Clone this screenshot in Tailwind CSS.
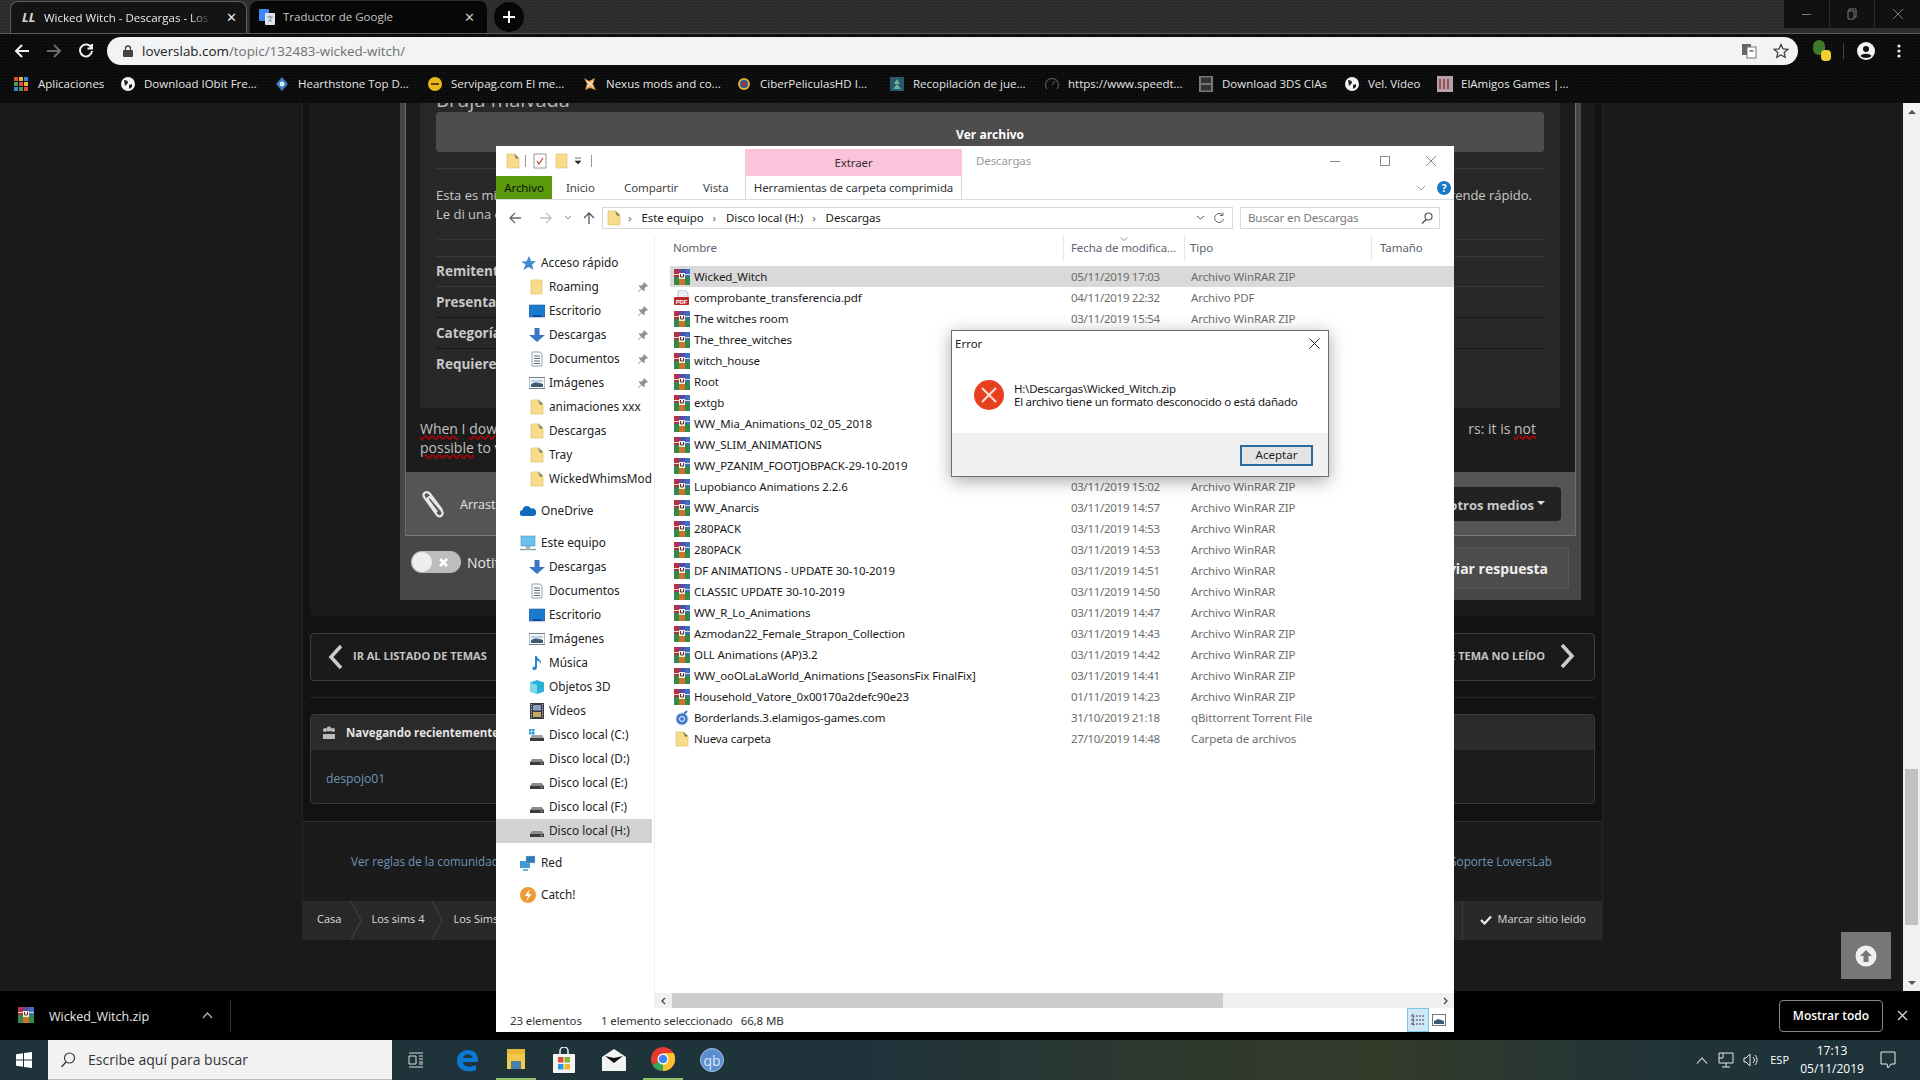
<!DOCTYPE html>
<html lang="es">
<head>
<meta charset="UTF-8" />
<title>Wicked Witch - Descargas</title>
<script src="https://cdn.jsdelivr.net/npm/@tailwindcss/browser@4"></script>
</head>
<body class="bg-black">
<!-- icon sprite -->
<svg class="absolute h-0 w-0">
  <symbol id="rar" viewBox="0 0 16 16">
    <rect x="0" y="0" width="5" height="8" fill="#b8323e"/><rect x="5" y="0" width="6" height="8" fill="#5a4aa8"/><rect x="11" y="0" width="5" height="8" fill="#3c6fc0"/>
    <rect x="0" y="8" width="5" height="8" fill="#2e8b4a"/><rect x="5" y="8" width="6" height="8" fill="#d0702a"/><rect x="11" y="8" width="5" height="8" fill="#2e8b4a"/>
    <rect x="0" y="5" width="16" height="1" fill="#e8d8d8"/><rect x="5" y="4" width="6" height="6" fill="#f4f0e8"/><path d="M6.500 5v3h3V5" fill="none" stroke="#5a3020" stroke-width="1"/>
  </symbol>
  <symbol id="pdf" viewBox="0 0 16 16">
    <path d="M4 0h7l3 3v6H4z" fill="#e6edf5" stroke="#8aa0b8" stroke-width=".6"/><rect x="0" y="7" width="15" height="8" rx="1" fill="#c0272d"/><text x="7.500" y="13.500" font-size="6" font-weight="700" fill="#fff" text-anchor="middle" font-family="Liberation Sans">PDF</text>
  </symbol>
  <symbol id="zipf" viewBox="0 0 16 16">
    <path d="M2 1h8l4 4v10H2z" fill="#f8dc8c" stroke="#e2c26a" stroke-width=".7"/><path d="M9 1l5 4-3 1z" fill="#6f8a6a"/>
  </symbol>
  <symbol id="folder" viewBox="0 0 16 16"><path d="M2 1h11v14H2z" fill="#f8dc8c" stroke="#e2c26a" stroke-width=".7"/></symbol>
  <symbol id="star" viewBox="0 0 16 16"><path d="M9 1l2 5 5 .3-4 3.300 1.400 5.200L8.500 12l-5 3 2-5.500L1 6.500l5.500-.3z" fill="#3e8bd3"/></symbol>
  <symbol id="desk" viewBox="0 0 16 16"><rect x="0" y="2" width="16" height="12" fill="#1a7ad0" stroke="#3a5a80" stroke-width=".6"/><rect x="4" y="12" width="8" height="2" fill="#0d4f96"/></symbol>
  <symbol id="down" viewBox="0 0 16 16"><path d="M5.500 1h5v7H16l-8 7-8-7h5.500z" fill="#3b78c4"/></symbol>
  <symbol id="doc" viewBox="0 0 16 16"><path d="M3 1h8l2 2v12H3z" fill="#fff" stroke="#7c8a98" stroke-width=".8"/><path d="M5 5h6M5 7.500h6M5 10h6M5 12.500h6" stroke="#5a6a7a"/></symbol>
  <symbol id="img" viewBox="0 0 16 16"><rect x="0" y="2.500" width="16" height="11" fill="#fff" stroke="#707c88"/><path d="M2 9l5-2 7 2v3H2z" fill="#3d5a74"/><rect x="2" y="4.500" width="12" height="3" fill="#c3d6e8"/></symbol>
  <symbol id="cloud" viewBox="0 0 16 16"><path d="M3 13a3 3 0 0 1-.500-6 4.500 4.500 0 0 1 8.500-1.500A3.800 3.800 0 0 1 13.500 13z" fill="#0f6cbd"/></symbol>
  <symbol id="pc" viewBox="0 0 16 16"><rect x="1" y="1" width="14" height="10" fill="#6cc0ee" stroke="#4a90b8" stroke-width=".6"/><path d="M0 14.500h16" stroke="#8aa0b0" stroke-width="1.500"/><rect x="6" y="11" width="4" height="2.500" fill="#9ab"/></symbol>
  <symbol id="music" viewBox="0 0 16 16"><path d="M6 1h1.800c.4 3 5 3.500 4.200 8-.6-2-2.300-3-4-3.200V12.500C8 14.500 6 15.500 4.500 15 3 14.500 3 12.500 4.500 11.800 5 11.500 5.500 11.500 6 11.600z" fill="#2f86d0"/></symbol>
  <symbol id="cube" viewBox="0 0 16 16"><path d="M8 1l7 2.500v9L8 15l-7-2.500v-9z" fill="#2ab0d8"/><path d="M1 3.500L8 6v9l-7-2.500z" fill="#7fd8ea"/></symbol>
  <symbol id="film" viewBox="0 0 16 16"><rect x="1" y="0" width="14" height="16" fill="#3a3a44"/><rect x="4" y="2" width="8" height="5.500" fill="#8aa0c0"/><rect x="4" y="9" width="8" height="5" fill="#c8a860"/><path d="M2.500 1v14M13.500 1v14" stroke="#ddd" stroke-dasharray="1 1.500"/></symbol>
  <symbol id="drive" viewBox="0 0 16 16"><path d="M3 8h10l2 3v3H1v-3z" fill="#8c8c8c"/><rect x="1" y="11" width="14" height="3" fill="#3c3c3c"/><rect x="11.500" y="12" width="2" height="1" fill="#9ad"/></symbol>
  <symbol id="drivec" viewBox="0 0 16 16"><path d="M3 8h10l2 3v3H1v-3z" fill="#a0a0a0"/><rect x="1" y="11" width="14" height="3" fill="#3c3c3c"/><path d="M0 2h2.500v2.500H0zM3 2h2.500v2.500H3zM0 5h2.500v2.500H0zM3 5h2.500v2.500H3z" fill="#2aa0d8"/></symbol>
  <symbol id="net" viewBox="0 0 16 16"><rect x="0" y="6" width="10" height="7" fill="#3f9ad8"/><rect x="6" y="1" width="9" height="7" fill="#2c7ab8" stroke="#bcd" stroke-width=".4"/><path d="M3 15h5" stroke="#3f9ad8" stroke-width="1.500"/></symbol>
  <symbol id="catch" viewBox="0 0 16 16"><circle cx="8" cy="8" r="8" fill="#ee9a35"/><path d="M9.500 2L5 9h3l-1.500 5L11.500 7H8.500z" fill="#fff"/></symbol>
  <symbol id="pin" viewBox="0 0 12 12"><path d="M7 1l4 4-1 .7-.7-.2L7.500 7.300 7.700 9.500 6.700 10.300 4.500 8 1.500 11 1 10.500 4 7.500 1.800 5.300 2.600 4.300 4.700 4.500 6.500 2.700 6.300 2z" fill="#8f8f8f"/></symbol>
  <symbol id="qb" viewBox="0 0 16 16"><circle cx="8" cy="9" r="6" fill="#3f78d0" stroke="#b9cde8" stroke-width="1"/><circle cx="8" cy="9" r="2.500" fill="none" stroke="#fff"/><path d="M10 4l3-3" stroke="#3f78d0" stroke-width="2"/></symbol>
</svg>

<div class="relative flex h-[1080px] w-[1920px] flex-col overflow-hidden font-['Open_Sans',sans-serif]">

  <!-- tab strip -->
  <div class="flex h-[34px] shrink-0 items-end border-b border-[#5a5a5a] bg-[#2c2c2c] bg-[radial-gradient(#383838_1px,transparent_1px)] bg-size-[3px_3px] pl-[10px]">
    <div class="flex h-[32px] w-[237px] items-center rounded-t-lg border border-b-0 border-[#5c5c5c] bg-[#141414] pl-[11px] text-[11.500px] text-[#e8e8e8]">
      <span class="w-[16px] text-[13px] leading-none font-bold italic text-[#d8d8d8]">LL</span>
      <span class="ml-[6px] w-[167px] overflow-hidden whitespace-nowrap [mask-image:linear-gradient(90deg,#000_88%,transparent)]">Wicked Witch - Descargas - Los S</span>
      <span class="ml-[15px] text-[13px] leading-none">✕</span>
    </div>
    <div class="ml-[3px] flex h-[32px] w-[237px] items-center rounded-t-lg bg-[#070707] pl-[9px] text-[11.500px] text-[#c4c4c4]">
      <svg class="h-4 w-4" viewBox="0 0 16 16"><rect width="10" height="12" rx="1" fill="#4285f4"/><rect x="6" y="4" width="10" height="12" rx="1" fill="#dfe5ee"/><path d="M8 8h6M11 6.500v1.500M9 13c2-1 3-3 3.500-5M10 10l3 3" stroke="#6a7a90" stroke-width=".8" fill="none"/></svg>
      <span class="ml-[8px] w-[170px] whitespace-nowrap">Traductor de Google</span>
      <span class="ml-[11px] text-[13px] leading-none">✕</span>
    </div>
    <div class="mb-px ml-[7px] flex h-[30px] w-[30px] items-center justify-center rounded-full bg-[#070707]">
      <svg class="h-[14px] w-[14px]" viewBox="0 0 14 14"><path d="M7 1v12M1 7h12" stroke="#fff" stroke-width="2"/></svg>
    </div>
    <div class="ml-auto flex h-[28px] self-start text-[#6c6c6c]">
      <div class="flex w-[46px] items-center justify-center border-r border-[#2a2a2a] bg-[#111]"><span class="h-px w-[9px] bg-[#7a7a7a]"></span></div>
      <div class="flex w-[45px] items-center justify-center border-r border-[#2a2a2a] bg-[#111]"><svg class="h-[12px] w-[12px]" viewBox="0 0 12 12"><path d="M3 3V1h7v8H8M2 3h6v8H2z" fill="none" stroke="#7a7a7a"/></svg></div>
      <div class="flex w-[45px] items-center justify-center bg-[#111]"><svg class="h-[12px] w-[12px]" viewBox="0 0 12 12"><path d="M1 1l10 10M11 1L1 11" stroke="#7a7a7a"/></svg></div>
    </div>
  </div>

  <!-- toolbar -->
  <div class="flex h-[34px] shrink-0 items-center bg-[#0b0b0b] bg-[radial-gradient(#191919_1px,transparent_1px)] bg-size-[3px_3px]">
    <svg class="ml-[14px] h-4 w-4" viewBox="0 0 16 16"><path d="M15 8H2M8 2L2 8l6 6" fill="none" stroke="#f0f0f0" stroke-width="2"/></svg>
    <svg class="ml-[16px] h-4 w-4" viewBox="0 0 16 16"><path d="M1 8h13M8 2l6 6-6 6" fill="none" stroke="#6a6a6a" stroke-width="2"/></svg>
    <svg class="ml-[16px] h-4 w-4" viewBox="0 0 16 16"><path d="M13.500 5A6 6 0 1 0 14 8M14 1v4.500H9.500" fill="none" stroke="#f0f0f0" stroke-width="2"/></svg>
    <div class="ml-[13px] flex h-[28px] w-[1691px] items-center rounded-full bg-[#f1f3f4] pl-[16px] text-[13.400px]">
      <svg class="h-[12px] w-[10px]" viewBox="0 0 10 12"><rect y="5" width="10" height="7" rx="1" fill="#444"/><path d="M2.500 5V3.500a2.500 2.500 0 0 1 5 0V5" fill="none" stroke="#444" stroke-width="1.300"/></svg>
      <span class="ml-[9px] text-[#222]">loverslab.com<span class="text-[#6f6f6f]">/topic/132483-wicked-witch/</span></span>
      <svg class="ml-auto h-4 w-4" viewBox="0 0 16 16"><rect x="1" y="1" width="9" height="11" fill="#666"/><rect x="6" y="4" width="9" height="11" fill="#fff" stroke="#777"/><path d="M8 8h5M10.500 7v1" stroke="#555"/></svg>
      <svg class="mr-[9px] ml-[16px] h-4 w-4" viewBox="0 0 16 16"><path d="M8 1.500l2 4.500 4.800.4-3.600 3.200 1 4.700L8 11.900 3.800 14.300l1-4.700L1.200 6.400 6 6z" fill="none" stroke="#444" stroke-width="1.300"/></svg>
    </div>
    <div class="relative ml-[15px] h-[22px] w-[16px]">
      <div class="h-[15px] w-[12px] rounded-full bg-[#3f7a2a]"></div>
      <div class="absolute top-[10px] left-[8px] h-[11px] w-[10px] rounded-sm bg-[#f0d030]"></div>
    </div>
    <span class="ml-[14px] h-[16px] w-px bg-[#444]"></span>
    <svg class="ml-[13px] h-[18px] w-[18px]" viewBox="0 0 18 18"><circle cx="9" cy="9" r="9" fill="#f4f4f4"/><circle cx="9" cy="7" r="3" fill="#111"/><path d="M3.500 14c1.500-3 9.500-3 11 0-2 2.500-9 2.500-11 0z" fill="#111"/></svg>
    <svg class="ml-[22px] h-[14px] w-[4px]" viewBox="0 0 4 14"><circle cx="2" cy="2" r="1.600" fill="#eee"/><circle cx="2" cy="7" r="1.600" fill="#eee"/><circle cx="2" cy="12" r="1.600" fill="#eee"/></svg>
  </div>

  <!-- bookmarks -->
  <div class="flex h-[35px] shrink-0 items-center bg-[#0b0b0b] bg-[radial-gradient(#191919_1px,transparent_1px)] bg-size-[3px_3px] pb-[3px] pl-[14px] text-[11.500px] whitespace-nowrap text-[#e4e4e4]">
    <div class="flex w-[107px] items-center"><svg class="h-[14px] w-[14px]" viewBox="0 0 14 14"><path d="M0 0h4v4H0z" fill="#e04a3a"/><path d="M5 0h4v4H5z" fill="#f0b030"/><path d="M10 0h4v4h-4z" fill="#3a80e0"/><path d="M0 5h4v4H0z" fill="#40a050"/><path d="M5 5h4v4H5z" fill="#e04a3a"/><path d="M10 5h4v4h-4z" fill="#f0b030"/><path d="M0 10h4v4H0z" fill="#3a80e0"/><path d="M5 10h4v4H5z" fill="#40a050"/><path d="M10 10h4v4h-4z" fill="#e04a3a"/></svg><span class="ml-[10px]">Aplicaciones</span></div>
    <div class="flex w-[154px] items-center"><svg class="h-[14px] w-[14px]" viewBox="0 0 14 14"><circle cx="7" cy="7" r="7" fill="#f4f4f4"/><path d="M3 3c3 0 4 1 4 3l-3 3zM8 8l3-1 0 3-3 2z" fill="#222"/></svg><span class="ml-[9px]">Download IObit Fre...</span></div>
    <div class="flex w-[153px] items-center"><svg class="h-[14px] w-[14px]" viewBox="0 0 14 14"><path d="M7 0l6 7-6 7-6-7z" fill="#3a78c0"/><circle cx="7" cy="7" r="2.500" fill="#d8e8f8"/></svg><span class="ml-[9px]">Hearthstone Top D...</span></div>
    <div class="flex w-[155px] items-center"><svg class="h-[14px] w-[14px]" viewBox="0 0 14 14"><circle cx="7" cy="7" r="7" fill="#e8b818"/><path d="M3 7h8" stroke="#604008" stroke-width="2"/></svg><span class="ml-[9px]">Servipag.com El me...</span></div>
    <div class="flex w-[154px] items-center"><svg class="h-[14px] w-[14px]" viewBox="0 0 14 14"><path d="M1 1l5 3 6-3-2 6 3 6-6-2-5 2 2-6z" fill="#e0a050"/><path d="M4 4l6 6M10 4l-6 6" stroke="#f4e4c8" stroke-width="1.500"/></svg><span class="ml-[9px]">Nexus mods and co...</span></div>
    <div class="flex w-[153px] items-center"><svg class="h-[14px] w-[14px]" viewBox="0 0 14 14"><circle cx="7" cy="7" r="6" fill="#e0b030"/><circle cx="7" cy="7" r="4" fill="#2a58a0"/><circle cx="7" cy="7" r="2" fill="#c83020"/></svg><span class="ml-[9px]">CiberPeliculasHD I...</span></div>
    <div class="flex w-[155px] items-center"><svg class="h-[14px] w-[14px]" viewBox="0 0 14 14"><rect width="14" height="14" fill="#2a5a68"/><path d="M7 2l3 5H4zM3 12l4-5 4 5z" fill="#6ab0a0"/></svg><span class="ml-[9px]">Recopilación de jue...</span></div>
    <div class="flex w-[154px] items-center"><svg class="h-[14px] w-[14px]" viewBox="0 0 14 14"><path d="M2 12a6.500 6.500 0 1 1 10 0M7 8l3-4" fill="none" stroke="#555" stroke-width="1.200"/></svg><span class="ml-[9px]">https://www.speedt...</span></div>
    <div class="flex w-[146px] items-center"><svg class="h-[16px] w-[14px]" viewBox="0 0 14 16"><rect width="14" height="16" fill="#777"/><rect x="2" y="1.500" width="10" height="5.500" fill="#333"/><rect x="2" y="9" width="10" height="5.500" fill="#333"/></svg><span class="ml-[9px]">Download 3DS CIAs</span></div>
    <div class="flex w-[92px] items-center"><svg class="h-[14px] w-[14px]" viewBox="0 0 14 14"><circle cx="7" cy="7" r="7" fill="#f4f4f4"/><path d="M3 3c3 0 4 1 4 3l-3 3zM8 8l3-1 0 3-3 2z" fill="#222"/></svg><span class="ml-[9px]">Vel. Vídeo</span></div>
    <div class="flex items-center"><svg class="h-[16px] w-[16px]" viewBox="0 0 16 16"><rect width="16" height="16" fill="#b8a0a8"/><path d="M3 3v10M7 3v10M11 3v10" stroke="#8a3a40" stroke-width="1.500"/></svg><span class="ml-[8px]">ElAmigos Games |...</span></div>
  </div>

  <!-- web page -->
  <div class="relative flex h-[888px] shrink-0 bg-[#1a1a1a]">
    <div class="h-full flex-1 overflow-hidden pl-[302px]">
      <div class="w-[1301px] border-x border-[#262626] bg-[#121212] text-[13px] text-[#c8c8c8]">
        <div class="mx-[7px]">
          <!-- main panel -->
          <div class="rounded-b-sm bg-[#1b1b1b] pr-[14px] pb-[16px] pl-[90px]">
            <div class="bg-[#474747] px-[5px]">
              <div class="border-x border-[#6e6e6e] bg-[#1c1c1c]">
                <div class="mr-[15px] ml-[14px] h-[305px] bg-[#282828] px-[16px]">
                  <div class="h-[9px] overflow-hidden"><div class="-mt-[16px] text-[20px] leading-[26px] text-[#b8b8b8]">Bruja malvada</div></div>
                  <div class="flex h-[40px] items-center justify-center rounded-sm bg-[#4d4d4d] pt-[6px] text-[12px] font-bold text-white">Ver archivo</div>
                  <div class="mt-[16px] border-t border-[#3a3a3a] pt-[17px] text-[13px] leading-[19px]">
                    <div class="flex justify-between pr-[12px]"><span>Esta es mi bruja malvada</span><span>rende rápido.</span></div>
                    <div>Le di una expresión</div>
                  </div>
                  <div class="mt-[15px] h-[17px] border-t border-[#343434]"></div>
                  <div class="flex h-[31px] items-center border-y border-[#3a3a3a] text-[13.500px] font-bold">Remitente</div>
                  <div class="flex h-[31px] items-center border-b border-[#161616] text-[13.500px] font-bold">Presentado</div>
                  <div class="flex h-[31px] items-center border-b border-[#161616] text-[13.500px] font-bold">Categoría</div>
                  <div class="flex h-[31px] items-center text-[13.500px] font-bold">Requiere</div>
                </div>
                <div class="mr-[39px] ml-[14px] flex h-[64px] flex-col pt-[11px] text-[14px] leading-[19px] text-[#c0c0c0]">
                  <div class="flex justify-between"><span><span class="underline decoration-red-700 decoration-wavy">When</span> I <span class="underline decoration-red-700 decoration-wavy">download</span></span><span>rs: it is <span class="underline decoration-red-700 decoration-wavy">not</span></span></div>
                  <div><span class="underline decoration-red-700 decoration-wavy">possible</span> to view</div>
                </div>
                <div class="flex h-[64px] items-center border-b border-[#7a7a7a] bg-[#555] pr-[14px] pl-[14px] text-[#e4e4e4]">
                  <svg class="h-[30px] w-[26px]" viewBox="0 0 26 30"><path d="M22 21L10 5C7 1 2 4 4 8l13 18c3 3 7 0 5-4L11 9c-2-2-4 0-3 2l9 12" fill="none" stroke="#e8e8e8" stroke-width="2.200"/></svg>
                  <span class="mt-[4px] ml-[14px] text-[12.500px]">Arrastra archivos aquí</span>
                  <div class="ml-auto flex h-[34px] items-center gap-[3px] rounded-sm bg-[#222] pt-[5px] pr-[16px] pl-[26px] font-bold text-[#c8c8c8]">Insertar por otros medios<span class="mb-[6px] h-0 w-0 border-x-[4px] border-t-[4px] border-x-transparent border-t-[#ddd]"></span></div>
                </div>
              </div>
              <div class="-mx-[5px] flex h-[64px] items-center pr-[12px] pl-[11px]">
                <div class="mb-[12px] flex h-[22px] w-[50px] items-center rounded-full bg-[#bdbdbd]"><span class="ml-[1px] h-[20px] w-[20px] rounded-full bg-[#eee]"></span><svg class="ml-[7px] h-[9px] w-[9px]" viewBox="0 0 9 9"><path d="M1 1l7 7M8 1L1 8" stroke="#fff" stroke-width="2.500"/></svg></div>
                <span class="mb-[12px] ml-[6px] text-[14px] text-[#e8e8e8]">Notificarme de respuestas</span>
                <div class="ml-auto flex h-[42px] items-center border border-[#565656] bg-[#4c4c4c] px-[20px] text-[14px] font-bold text-[#f0f0f0]">Enviar respuesta</div>
              </div>
            </div>
          </div>
          <!-- pager -->
          <div class="mt-[17px] flex h-[48px] items-center justify-between rounded-sm border border-[#3e3e3e] bg-[#1a1a1a] pr-[19px] pl-[17px] text-[11px] font-bold text-[#c4c4c4]">
            <div class="flex items-center"><svg class="h-[26px] w-[15px]" viewBox="0 0 15 26"><path d="M13 2L3 13l10 11" fill="none" stroke="#ccc" stroke-width="3.500"/></svg><span class="mb-[2px] ml-[10px]">IR AL LISTADO DE TEMAS</span></div>
            <div class="flex items-center"><span class="mb-[2px]">SIGUIENTE TEMA NO LEÍDO</span><svg class="mb-[2px] ml-[15px] h-[26px] w-[15px]" viewBox="0 0 15 26"><path d="M2 2l10 11L2 24" fill="none" stroke="#ccc" stroke-width="3.500"/></svg></div>
          </div>
          <div class="mt-[16px] border-t border-[#262626]"></div>
          <!-- recently browsing -->
          <div class="mt-[16px] h-[90px] rounded-sm border border-[#3a3a3a] bg-[#1c1c1c]">
            <div class="flex h-[35px] items-center bg-[#2b2b2b] pl-[11px] text-[11.500px] font-bold text-[#e4e4e4]">
              <svg class="h-[14px] w-[14px]" viewBox="0 0 14 14"><circle cx="3" cy="4" r="2" fill="#bbb"/><circle cx="11" cy="4" r="2" fill="#bbb"/><circle cx="7" cy="3" r="2.500" fill="#bbb"/><path d="M1 13V8h12v5z" fill="#bbb"/></svg>
              <span class="ml-[10px]">Navegando recientemente</span>
            </div>
            <div class="pt-[20px] pl-[15px] text-[12.200px] text-[#6d94b8]">despojo01</div>
          </div>
        </div>
        <!-- footer -->
        <div class="mt-[17px] border-t border-[#2e2e2e] bg-[#1b1b1b]">
          <div class="flex h-[79px] items-center justify-between pr-[50px] pl-[48px] text-[11.700px] text-[#6d94b8]"><span>Ver reglas de la comunidad</span><span>Soporte LoversLab</span></div>
          <div class="flex h-[39px] items-center bg-[#292929] pl-[14px] text-[11px] text-[#dcdcdc]">
            <span class="mb-[2px]">Casa</span>
            <svg class="ml-[9px] h-[39px] w-[12px]" viewBox="0 0 12 39"><path d="M1 0l10 19.500L1 39" fill="none" stroke="#444"/></svg>
            <span class="mb-[2px] ml-[9px]">Los sims 4</span>
            <svg class="ml-[7px] h-[39px] w-[12px]" viewBox="0 0 12 39"><path d="M1 0l10 19.500L1 39" fill="none" stroke="#444"/></svg>
            <span class="mb-[2px] ml-[10px]">Los Sims 4 Mods</span>
            <div class="ml-auto flex h-full items-center border-l border-[#3a3a3a] pr-[16px] pl-[17px]">
              <svg class="mb-[2px] h-[10px] w-[12px]" viewBox="0 0 12 10"><path d="M1 5l3.500 3.500L11 1.500" fill="none" stroke="#eee" stroke-width="2.200"/></svg>
              <span class="mb-[2px] ml-[5px]">Marcar sitio leído</span>
            </div>
          </div>
        </div>
      </div>
    </div>
    <!-- page scrollbar -->
    <div class="flex h-full w-[17px] flex-col items-center bg-[#f1f1f1]">
      <div class="flex h-[17px] items-center justify-center"><span class="h-0 w-0 border-x-[4px] border-b-[4px] border-x-transparent border-b-[#505050]"></span></div>
      <div class="mt-[649px] h-[156px] w-[13px] bg-[#c1c1c1]"></div>
      <div class="mt-auto flex h-[17px] items-center justify-center"><span class="h-0 w-0 border-x-[4px] border-t-[4px] border-x-transparent border-t-[#505050]"></span></div>
    </div>
    <!-- back to top -->
    <div class="absolute top-[829px] left-[1841px] flex h-[47px] w-[50px] items-center justify-center bg-[#777]">
      <svg class="h-[22px] w-[22px]" viewBox="0 0 22 22"><circle cx="11" cy="11" r="10.500" fill="#f0f0f0"/><path d="M11 5l6 6h-3.500v6h-5v-6H5z" fill="#777"/></svg>
    </div>
  </div>

  <!-- download bar -->
  <div class="flex h-[49px] shrink-0 items-center bg-black pr-[10px] text-white">
    <svg class="ml-[18px] h-[16px] w-[16px] -translate-y-[1px]"><use href="#rar"/></svg>
    <span class="mt-[4px] ml-[15px] text-[12.500px] text-[#e8e8e8]">Wicked_Witch.zip</span>
    <svg class="ml-[53px] h-[7px] w-[11px]" viewBox="0 0 11 7"><path d="M1 6l4.500-5L10 6" fill="none" stroke="#bbb" stroke-width="1.200"/></svg>
    <span class="ml-[17px] h-[32px] w-px bg-[#333]"></span>
    <div class="ml-auto flex h-[32px] w-[104px] items-center justify-center rounded border border-[#888] text-[12px] font-semibold">Mostrar todo</div>
    <svg class="mr-[2px] ml-[14px] h-[11px] w-[11px]" viewBox="0 0 11 11"><path d="M1 1l9 9M10 1l-9 9" stroke="#ddd" stroke-width="1.300"/></svg>
  </div>

  <!-- taskbar -->
  <div class="flex h-[40px] shrink-0 items-center bg-[linear-gradient(90deg,#1f333b_0%,#1f333b_45%,#2f392e_62%,#333a2a_72%,#1f3339_88%,#1f333b_100%)] text-white">
    <svg class="ml-[16px] h-[16px] w-[16px]" viewBox="0 0 16 16"><path d="M0 2.300L7 1.300V7.500H0zM8 1.100L16 0V7.500H8zM0 8.500H7V14.700L0 13.700zM8 8.500H16V16L8 14.900z" fill="#fff"/></svg>
    <div class="ml-[16px] flex h-full w-[344px] items-center border-b border-[#bbb] bg-[#f2f2f2] pl-[12px] text-[14px] text-[#333]">
      <svg class="h-[16px] w-[16px]" viewBox="0 0 16 16"><circle cx="9.500" cy="6" r="5" fill="none" stroke="#333" stroke-width="1.100"/><path d="M6 10L1.500 15" stroke="#333" stroke-width="1.200"/></svg>
      <span class="ml-[12px]">Escribe aquí para buscar</span>
    </div>
    <svg class="ml-[16px] h-[16px] w-[16px]" viewBox="0 0 16 16"><path d="M1 1h14M1 15h14M1 4h7v8H1zM11 4h4M11 7h4M11 10h4M11 12h4" fill="none" stroke="#ddd"/></svg>
    <div class="ml-[23px] flex h-full w-[40px] items-center justify-center"><svg class="h-[24px] w-[24px]" viewBox="0 0 24 24"><path d="M2 13C2 6 7 2 13 2c6 0 10 4 10 10v2H8c0 5 8 6 13 3v5c-7 3-19 1-19-9zm6-3h9c0-5-8-5-9 0z" fill="#0a78d4"/></svg></div>
    <div class="ml-[9px] flex h-full w-[40px] items-center justify-center border-b-2 border-[#8fbf6a]"><svg class="h-[24px] w-[24px]" viewBox="0 0 24 24"><path d="M3 2h18v20H3z" fill="#f4c84a"/><path d="M3 2h18v5H3z" fill="#e8b838"/><rect x="7" y="14" width="10" height="8" fill="#4a7fa8"/></svg></div>
    <div class="ml-[8px] flex h-full w-[40px] items-center justify-center"><svg class="h-[26px] w-[24px]" viewBox="0 0 24 26"><path d="M8 7V4a4 4 0 0 1 8 0v3" fill="none" stroke="#eee" stroke-width="1.500"/><rect x="1" y="7" width="22" height="19" rx="1" fill="#f4f4f4"/><rect x="6" y="10" width="5.500" height="5.500" fill="#e24a30"/><rect x="12.500" y="10" width="5.500" height="5.500" fill="#7bb830"/><rect x="6" y="17" width="5.500" height="5.500" fill="#2a9ae0"/><rect x="12.500" y="17" width="5.500" height="5.500" fill="#f0b820"/></svg></div>
    <div class="ml-[10px] flex h-full w-[40px] items-center justify-center"><svg class="h-[24px] w-[24px]" viewBox="0 0 24 24"><path d="M0 9L12 1l12 8v14H0z" fill="#f4f4f4"/><path d="M3 8l9 7 9-7-9 2z" fill="#111"/></svg></div>
    <div class="ml-[9px] flex h-full w-[40px] items-center justify-center border-b-2 border-[#8fbf6a]"><svg class="h-[24px] w-[24px]" viewBox="0 0 24 24"><circle cx="12" cy="12" r="12" fill="#e53a2f"/><path d="M12 12L1.600 18A12 12 0 0 0 12 24c2 0 4-.5 5.500-1.500z" fill="#35a853"/><path d="M12 6h10.500A12 12 0 0 1 12 24z" fill="#fbc02d"/><circle cx="12" cy="12" r="5.500" fill="#fff"/><circle cx="12" cy="12" r="4.300" fill="#4285f4"/></svg></div>
    <div class="ml-[17px] flex h-[24px] w-[24px] items-center justify-center rounded-full border border-[#a8c4e8] bg-[#5a8ed0] text-[14px] text-[#dce8f8]">qb</div>

    <svg class="ml-auto h-[7px] w-[12px]" viewBox="0 0 12 7"><path d="M1 6.500L6 1l5 5.500" fill="none" stroke="#e8e8e8" stroke-width="1.100"/></svg>
    <svg class="ml-[10px] h-[16px] w-[16px]" viewBox="0 0 16 16"><path d="M1 1h14v10H1zM5 1v5H1M8 11v4M4 15h8" fill="none" stroke="#e8e8e8"/></svg>
    <svg class="ml-[9px] h-[16px] w-[16px]" viewBox="0 0 16 16"><path d="M1 6h2l4-4v12l-4-4H1zM10 5a4 4 0 0 1 0 6M12 3a7 7 0 0 1 0 10" fill="none" stroke="#e8e8e8"/></svg>
    <span class="ml-[11px] text-[11px]">ESP</span>
    <div class="ml-[14px] flex w-[58px] flex-col items-center text-[12px] leading-[18px]"><span>17:13</span><span>05/11/2019</span></div>
    <svg class="mr-[24px] ml-[19px] h-[18px] w-[16px]" viewBox="0 0 16 18"><path d="M1 1h14v12h-4l-3 4-1-4H1z" fill="none" stroke="#eee"/></svg>
  </div>

  <!-- file explorer window -->
  <div class="absolute top-[146px] left-[496px] flex h-[886px] w-[958px] flex-col bg-white font-['Noto_Sans',sans-serif] text-[11.500px] tracking-[-0.1px] text-[#1a1a1a]">
    <!-- title row -->
    <div class="flex h-[30px] shrink-0">
      <div class="flex w-[249px] items-center pl-[9px]">
        <svg class="h-[16px] w-[16px]"><use href="#zipf"/></svg>
        <span class="ml-[4px] h-[12px] w-px bg-[#999]"></span>
        <svg class="ml-[7px] h-[16px] w-[14px]" viewBox="0 0 14 16"><path d="M1 1h12v14H1z" fill="#fff" stroke="#999"/><path d="M4 8l2 3 4-6" fill="none" stroke="#c0392b" stroke-width="1.200"/></svg>
        <svg class="ml-[7px] h-[16px] w-[16px]"><use href="#folder"/></svg>
        <svg class="ml-[4px] h-[8px] w-[8px]" viewBox="0 0 8 8"><path d="M1 1h6M1 4h6L4 7z" fill="#333" stroke="#333" stroke-width=".7"/></svg>
        <span class="ml-[9px] h-[12px] w-px bg-[#999]"></span>
      </div>
      <div class="mt-[3px] flex w-[217px] items-center justify-center bg-[#fbc4dc] text-[#333]">Extraer</div>
      <div class="flex flex-1 items-center pb-[1px] pl-[14px] text-[#9a9a9a]">Descargas</div>
      <div class="flex items-center">
        <span class="mr-[40px] h-px w-[10px] bg-[#8a8a8a]"></span>
        <span class="mr-[36px] h-[10px] w-[10px] border border-[#8a8a8a]"></span>
        <svg class="mr-[18px] h-[10px] w-[10px]" viewBox="0 0 10 10"><path d="M0 0l10 10M10 0L0 10" stroke="#8a8a8a"/></svg>
      </div>
    </div>
    <!-- ribbon tabs -->
    <div class="flex h-[24px] shrink-0 items-center border-b border-[#dadada] text-[#444]">
      <div class="flex h-full w-[56px] items-center justify-center bg-[#5a9a0a] text-[#111]">Archivo</div>
      <span class="ml-[14px] w-[58px]">Inicio</span>
      <span class="w-[79px]">Compartir</span>
      <span class="w-[42px]">Vista</span>
      <div class="flex h-[24px] w-[217px] items-center justify-center border-x border-[#e0d0d8] text-[#333]">Herramientas de carpeta comprimida</div>
      <svg class="ml-auto h-[6px] w-[10px]" viewBox="0 0 10 6"><path d="M1 1l4 4 4-4" fill="none" stroke="#999"/></svg>
      <div class="mr-[3px] ml-[11px] flex h-[14px] w-[14px] items-center justify-center rounded-full bg-[#1a78c8] text-[10px] leading-none font-bold text-white">?</div>
    </div>
    <!-- nav row -->
    <div class="flex h-[35px] shrink-0 items-center">
      <svg class="ml-[12px] h-[14px] w-[14px]" viewBox="0 0 14 14"><path d="M13 7H2M7 2L2 7l5 5" fill="none" stroke="#666" stroke-width="1.300"/></svg>
      <svg class="ml-[17px] h-[14px] w-[14px]" viewBox="0 0 14 14"><path d="M1 7h11M7 2l5 5-5 5" fill="none" stroke="#c0c0c0" stroke-width="1.300"/></svg>
      <svg class="ml-[11px] h-[5px] w-[8px]" viewBox="0 0 8 5"><path d="M1 1l3 3 3-3" fill="none" stroke="#888"/></svg>
      <svg class="ml-[10px] h-[14px] w-[14px]" viewBox="0 0 14 14"><path d="M7 13V2M2 7l5-5 5 5" fill="none" stroke="#555" stroke-width="1.300"/></svg>
      <div class="ml-[6px] flex h-[22px] w-[631px] items-center border border-[#d9d9d9] pr-[7px] pl-[3px]">
        <svg class="h-[16px] w-[16px]"><use href="#zipf"/></svg>
        <span class="ml-[6px] text-[#666]">›</span><span class="ml-[10px]">Este equipo</span>
        <span class="ml-[9px] text-[#666]">›</span><span class="ml-[10px]">Disco local (H:)</span>
        <span class="ml-[9px] text-[#666]">›</span><span class="ml-[10px]">Descargas</span>
        <svg class="ml-auto h-[5px] w-[9px]" viewBox="0 0 9 5"><path d="M1 1l3.500 3L8 1" fill="none" stroke="#555"/></svg>
        <svg class="ml-[8px] h-[12px] w-[12px]" viewBox="0 0 12 12"><path d="M9.500 3A4.500 4.500 0 1 0 10.500 7M10 0.500V3.500H7" fill="none" stroke="#666"/></svg>
      </div>
      <div class="ml-[7px] flex h-[22px] w-[200px] items-center border border-[#d9d9d9] pr-[6px] pl-[7px] text-[#777]">
        Buscar en Descargas
        <svg class="ml-auto h-[12px] w-[12px]" viewBox="0 0 12 12"><circle cx="7.500" cy="4.500" r="3.500" fill="none" stroke="#555" stroke-width="1.200"/><path d="M5 7.500L1 11.500" stroke="#555" stroke-width="1.500"/></svg>
      </div>
    </div>
    <!-- body -->
    <div class="flex min-h-0 flex-1">
      <!-- nav pane -->
      <div class="w-[159px] shrink-0 border-r border-[#efefef] pt-[16px] text-[11.800px] tracking-normal text-[#222]">
        <div class="flex h-6 items-center pl-[24px]"><svg class="h-4 w-4"><use href="#star"/></svg><span class="ml-[5px]">Acceso rápido</span></div>
        <div class="flex h-6 items-center pl-[33px]"><svg class="h-4 w-4"><use href="#folder"/></svg><span class="ml-1">Roaming</span><svg class="mr-[5px] ml-auto h-3 w-3"><use href="#pin"/></svg></div>
        <div class="flex h-6 items-center pl-[33px]"><svg class="h-4 w-4"><use href="#desk"/></svg><span class="ml-1">Escritorio</span><svg class="mr-[5px] ml-auto h-3 w-3"><use href="#pin"/></svg></div>
        <div class="flex h-6 items-center pl-[33px]"><svg class="h-4 w-4"><use href="#down"/></svg><span class="ml-1">Descargas</span><svg class="mr-[5px] ml-auto h-3 w-3"><use href="#pin"/></svg></div>
        <div class="flex h-6 items-center pl-[33px]"><svg class="h-4 w-4"><use href="#doc"/></svg><span class="ml-1">Documentos</span><svg class="mr-[5px] ml-auto h-3 w-3"><use href="#pin"/></svg></div>
        <div class="flex h-6 items-center pl-[33px]"><svg class="h-4 w-4"><use href="#img"/></svg><span class="ml-1">Imágenes</span><svg class="mr-[5px] ml-auto h-3 w-3"><use href="#pin"/></svg></div>
        <div class="flex h-6 items-center pl-[33px]"><svg class="h-4 w-4"><use href="#zipf"/></svg><span class="ml-1">animaciones xxx</span></div>
        <div class="flex h-6 items-center pl-[33px]"><svg class="h-4 w-4"><use href="#zipf"/></svg><span class="ml-1">Descargas</span></div>
        <div class="flex h-6 items-center pl-[33px]"><svg class="h-4 w-4"><use href="#zipf"/></svg><span class="ml-1">Tray</span></div>
        <div class="flex h-6 items-center pl-[33px]"><svg class="h-4 w-4"><use href="#zipf"/></svg><span class="ml-1 whitespace-nowrap">WickedWhimsMod</span></div>
        <div class="mt-2 flex h-6 items-center pl-[24px]"><svg class="h-4 w-4"><use href="#cloud"/></svg><span class="ml-[5px]">OneDrive</span></div>
        <div class="mt-2 flex h-6 items-center pl-[24px]"><svg class="h-4 w-4"><use href="#pc"/></svg><span class="ml-[5px]">Este equipo</span></div>
        <div class="flex h-6 items-center pl-[33px]"><svg class="h-4 w-4"><use href="#down"/></svg><span class="ml-1">Descargas</span></div>
        <div class="flex h-6 items-center pl-[33px]"><svg class="h-4 w-4"><use href="#doc"/></svg><span class="ml-1">Documentos</span></div>
        <div class="flex h-6 items-center pl-[33px]"><svg class="h-4 w-4"><use href="#desk"/></svg><span class="ml-1">Escritorio</span></div>
        <div class="flex h-6 items-center pl-[33px]"><svg class="h-4 w-4"><use href="#img"/></svg><span class="ml-1">Imágenes</span></div>
        <div class="flex h-6 items-center pl-[33px]"><svg class="h-4 w-4"><use href="#music"/></svg><span class="ml-1">Música</span></div>
        <div class="flex h-6 items-center pl-[33px]"><svg class="h-4 w-4"><use href="#cube"/></svg><span class="ml-1">Objetos 3D</span></div>
        <div class="flex h-6 items-center pl-[33px]"><svg class="h-4 w-4"><use href="#film"/></svg><span class="ml-1">Vídeos</span></div>
        <div class="flex h-6 items-center pl-[33px]"><svg class="h-4 w-4"><use href="#drivec"/></svg><span class="ml-1">Disco local (C:)</span></div>
        <div class="flex h-6 items-center pl-[33px]"><svg class="h-4 w-4"><use href="#drive"/></svg><span class="ml-1">Disco local (D:)</span></div>
        <div class="flex h-6 items-center pl-[33px]"><svg class="h-4 w-4"><use href="#drive"/></svg><span class="ml-1">Disco local (E:)</span></div>
        <div class="flex h-6 items-center pl-[33px]"><svg class="h-4 w-4"><use href="#drive"/></svg><span class="ml-1">Disco local (F:)</span></div>
        <div class="mr-[2px] flex h-6 items-center bg-[#d2d2d2] pl-[33px]"><svg class="h-4 w-4"><use href="#drive"/></svg><span class="ml-1">Disco local (H:)</span></div>
        <div class="mt-2 flex h-6 items-center pl-[24px]"><svg class="h-4 w-4"><use href="#net"/></svg><span class="ml-[5px]">Red</span></div>
        <div class="mt-2 flex h-6 items-center pl-[24px]"><svg class="h-4 w-4"><use href="#catch"/></svg><span class="ml-[5px]">Catch!</span></div>
      </div>
      <!-- file pane -->
      <div class="flex min-w-0 flex-1 flex-col">
        <div class="relative flex h-[31px] shrink-0 pb-[5px] text-[#5a6472]">
          <div class="flex w-[409px] items-center border-r border-[#e8e8e8] pl-[18px]">Nombre</div>
          <div class="flex w-[121px] items-center border-r border-[#e8e8e8] pl-[7px]">Fecha de modifica...</div>
          <div class="flex w-[187px] items-center border-r border-[#e8e8e8] pl-[5px]">Tipo</div>
          <div class="flex items-center pl-[8px]">Tamaño</div>
          <svg class="absolute top-[2px] left-[465px] h-[4px] w-[8px]" viewBox="0 0 8 4"><path d="M.5.500L4 3.500 7.500.500" fill="none" stroke="#999"/></svg>
        </div>
        <div class="ml-[15px] flex-1 text-[#6d6d6d]">
          <div class="flex h-[21px] items-center bg-[#d9d9d9]"><svg class="ml-[4px] h-4 w-4"><use href="#rar"/></svg><span class="ml-1 w-[377px] text-[#1a1a1a]">Wicked_Witch</span><span class="w-[120px] tracking-[-0.3px]">05/11/2019 17:03</span><span>Archivo WinRAR ZIP</span></div>
          <div class="flex h-[21px] items-center"><svg class="ml-[4px] h-4 w-4"><use href="#pdf"/></svg><span class="ml-1 w-[377px] text-[#1a1a1a]">comprobante_transferencia.pdf</span><span class="w-[120px] tracking-[-0.3px]">04/11/2019 22:32</span><span>Archivo PDF</span></div>
          <div class="flex h-[21px] items-center"><svg class="ml-[4px] h-4 w-4"><use href="#rar"/></svg><span class="ml-1 w-[377px] text-[#1a1a1a]">The witches room</span><span class="w-[120px] tracking-[-0.3px]">03/11/2019 15:54</span><span>Archivo WinRAR ZIP</span></div>
          <div class="flex h-[21px] items-center"><svg class="ml-[4px] h-4 w-4"><use href="#rar"/></svg><span class="ml-1 w-[377px] text-[#1a1a1a]">The_three_witches</span></div>
          <div class="flex h-[21px] items-center"><svg class="ml-[4px] h-4 w-4"><use href="#rar"/></svg><span class="ml-1 w-[377px] text-[#1a1a1a]">witch_house</span></div>
          <div class="flex h-[21px] items-center"><svg class="ml-[4px] h-4 w-4"><use href="#rar"/></svg><span class="ml-1 w-[377px] text-[#1a1a1a]">Root</span></div>
          <div class="flex h-[21px] items-center"><svg class="ml-[4px] h-4 w-4"><use href="#rar"/></svg><span class="ml-1 w-[377px] text-[#1a1a1a]">extgb</span></div>
          <div class="flex h-[21px] items-center"><svg class="ml-[4px] h-4 w-4"><use href="#rar"/></svg><span class="ml-1 w-[377px] text-[#1a1a1a]">WW_Mia_Animations_02_05_2018</span></div>
          <div class="flex h-[21px] items-center"><svg class="ml-[4px] h-4 w-4"><use href="#rar"/></svg><span class="ml-1 w-[377px] text-[#1a1a1a]">WW_SLIM_ANIMATIONS</span></div>
          <div class="flex h-[21px] items-center"><svg class="ml-[4px] h-4 w-4"><use href="#rar"/></svg><span class="ml-1 w-[377px] text-[#1a1a1a]">WW_PZANIM_FOOTJOBPACK-29-10-2019</span></div>
          <div class="flex h-[21px] items-center"><svg class="ml-[4px] h-4 w-4"><use href="#rar"/></svg><span class="ml-1 w-[377px] text-[#1a1a1a]">Lupobianco Animations 2.2.6</span><span class="w-[120px] tracking-[-0.3px]">03/11/2019 15:02</span><span>Archivo WinRAR ZIP</span></div>
          <div class="flex h-[21px] items-center"><svg class="ml-[4px] h-4 w-4"><use href="#rar"/></svg><span class="ml-1 w-[377px] text-[#1a1a1a]">WW_Anarcis</span><span class="w-[120px] tracking-[-0.3px]">03/11/2019 14:57</span><span>Archivo WinRAR ZIP</span></div>
          <div class="flex h-[21px] items-center"><svg class="ml-[4px] h-4 w-4"><use href="#rar"/></svg><span class="ml-1 w-[377px] text-[#1a1a1a]">280PACK</span><span class="w-[120px] tracking-[-0.3px]">03/11/2019 14:53</span><span>Archivo WinRAR</span></div>
          <div class="flex h-[21px] items-center"><svg class="ml-[4px] h-4 w-4"><use href="#rar"/></svg><span class="ml-1 w-[377px] text-[#1a1a1a]">280PACK</span><span class="w-[120px] tracking-[-0.3px]">03/11/2019 14:53</span><span>Archivo WinRAR</span></div>
          <div class="flex h-[21px] items-center"><svg class="ml-[4px] h-4 w-4"><use href="#rar"/></svg><span class="ml-1 w-[377px] text-[#1a1a1a]">DF ANIMATIONS - UPDATE 30-10-2019</span><span class="w-[120px] tracking-[-0.3px]">03/11/2019 14:51</span><span>Archivo WinRAR</span></div>
          <div class="flex h-[21px] items-center"><svg class="ml-[4px] h-4 w-4"><use href="#rar"/></svg><span class="ml-1 w-[377px] text-[#1a1a1a]">CLASSIC UPDATE 30-10-2019</span><span class="w-[120px] tracking-[-0.3px]">03/11/2019 14:50</span><span>Archivo WinRAR</span></div>
          <div class="flex h-[21px] items-center"><svg class="ml-[4px] h-4 w-4"><use href="#rar"/></svg><span class="ml-1 w-[377px] text-[#1a1a1a]">WW_R_Lo_Animations</span><span class="w-[120px] tracking-[-0.3px]">03/11/2019 14:47</span><span>Archivo WinRAR</span></div>
          <div class="flex h-[21px] items-center"><svg class="ml-[4px] h-4 w-4"><use href="#rar"/></svg><span class="ml-1 w-[377px] text-[#1a1a1a]">Azmodan22_Female_Strapon_Collection</span><span class="w-[120px] tracking-[-0.3px]">03/11/2019 14:43</span><span>Archivo WinRAR ZIP</span></div>
          <div class="flex h-[21px] items-center"><svg class="ml-[4px] h-4 w-4"><use href="#rar"/></svg><span class="ml-1 w-[377px] text-[#1a1a1a]">OLL Animations (AP)3.2</span><span class="w-[120px] tracking-[-0.3px]">03/11/2019 14:42</span><span>Archivo WinRAR ZIP</span></div>
          <div class="flex h-[21px] items-center"><svg class="ml-[4px] h-4 w-4"><use href="#rar"/></svg><span class="ml-1 w-[377px] text-[#1a1a1a]">WW_ooOLaLaWorld_Animations [SeasonsFix FinalFix]</span><span class="w-[120px] tracking-[-0.3px]">03/11/2019 14:41</span><span>Archivo WinRAR ZIP</span></div>
          <div class="flex h-[21px] items-center"><svg class="ml-[4px] h-4 w-4"><use href="#rar"/></svg><span class="ml-1 w-[377px] text-[#1a1a1a]">Household_Vatore_0x00170a2defc90e23</span><span class="w-[120px] tracking-[-0.3px]">01/11/2019 14:23</span><span>Archivo WinRAR ZIP</span></div>
          <div class="flex h-[21px] items-center"><svg class="ml-[4px] h-4 w-4"><use href="#qb"/></svg><span class="ml-1 w-[377px] text-[#1a1a1a]">Borderlands.3.elamigos-games.com</span><span class="w-[120px] tracking-[-0.3px]">31/10/2019 21:18</span><span>qBittorrent Torrent File</span></div>
          <div class="flex h-[21px] items-center"><svg class="ml-[4px] h-4 w-4"><use href="#zipf"/></svg><span class="ml-1 w-[377px] text-[#1a1a1a]">Nueva carpeta</span><span class="w-[120px] tracking-[-0.3px]">27/10/2019 14:48</span><span>Carpeta de archivos</span></div>
        </div>
        <!-- horizontal scrollbar -->
        <div class="flex h-[15px] shrink-0 items-center bg-[#f0f0f0]">
          <div class="flex w-[17px] justify-center"><svg class="h-[8px] w-[5px]" viewBox="0 0 5 8"><path d="M4 1L1 4l3 3" fill="none" stroke="#444" stroke-width="1.300"/></svg></div>
          <div class="h-full w-[551px] bg-[#cdcdcd]"></div>
          <div class="ml-auto flex w-[17px] justify-center"><svg class="h-[8px] w-[5px]" viewBox="0 0 5 8"><path d="M1 1l3 3-3 3" fill="none" stroke="#444" stroke-width="1.300"/></svg></div>
        </div>
      </div>
    </div>
    <!-- status bar -->
    <div class="flex h-[24px] shrink-0 items-center pl-[14px] text-[#333]">
      <span class="w-[91px] pt-[2px]">23 elementos</span>
      <span class="pt-[2px]">1 elemento seleccionado</span>
      <span class="ml-[8px] pt-[2px]">66,8 MB</span>
      <div class="ml-auto flex h-full items-center">
        <div class="flex h-full w-[22px] items-center justify-center border border-[#7fc8e8] bg-[#cfe8f6]"><svg class="h-[14px] w-[14px]" viewBox="0 0 14 14"><path d="M1 2h2v2H1zM1 6h2v2H1zM1 10h2v2H1zM5 3h8M5 7h8M5 11h8" fill="none" stroke="#444" stroke-dasharray="2 1"/></svg></div>
        <svg class="mr-[8px] ml-[3px] h-[14px] w-[14px]" viewBox="0 0 14 14"><rect x=".5" y="1.500" width="13" height="11" fill="#fff" stroke="#777"/><path d="M2 8l4-2 6 2v3H2z" fill="#3d5a74"/></svg>
      </div>
    </div>
  </div>

  <!-- error dialog -->
  <div class="absolute top-[330px] left-[951px] flex h-[147px] w-[378px] flex-col border border-[#6e6e6e] bg-white font-['Noto_Sans',sans-serif] text-[11.500px] text-[#1a1a1a] shadow-[0_4px_16px_rgba(0,0,0,0.35)]">
    <div class="flex h-[25px] shrink-0 items-center justify-between pr-[8px] pl-[3px]">
      <span>Error</span>
      <svg class="h-[11px] w-[11px]" viewBox="0 0 11 11"><path d="M.5.500l10 10M10.500.500l-10 10" stroke="#222"/></svg>
    </div>
    <div class="flex flex-1 items-center pl-[22px]">
      <svg class="h-[30px] w-[30px]" viewBox="0 0 30 30"><circle cx="15" cy="15" r="15" fill="#e8401f"/><path d="M8 8l14 14M22 8L8 22" stroke="#fbe0d8" stroke-width="2"/></svg>
      <div class="ml-[10px] leading-[13px] tracking-[-0.25px]">
        <div>H:\Descargas\Wicked_Witch.zip</div>
        <div>El archivo tiene un formato desconocido o está dañado</div>
      </div>
    </div>
    <div class="flex h-[43px] shrink-0 items-center justify-end bg-[#f0f0f0] pt-[1px] pr-[15px]">
      <div class="flex h-[21px] w-[73px] items-center justify-center border-2 border-[#2a6ca0] bg-[#e4e4e4] text-[#222]">Aceptar</div>
    </div>
  </div>
</div>
</body>
</html>
